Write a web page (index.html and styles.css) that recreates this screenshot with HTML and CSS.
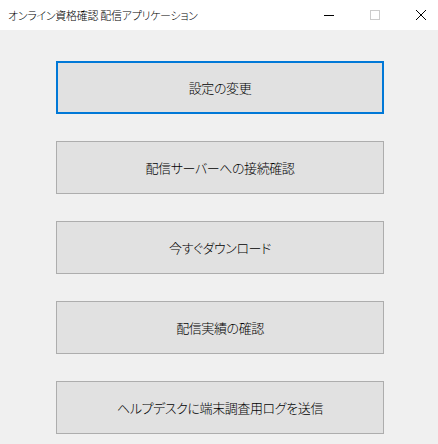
FILE: index.html
```html
<!DOCTYPE html>
<html lang="ja">
<head>
<meta charset="utf-8">
<link rel="stylesheet" href="styles.css">
</head>
<body>
<div class="window">
  <div class="titlebar">
    <div class="title">オンライン資格確認 配信アプリケーション</div>
    <div class="controls">
      <div class="ctl">
        <svg width="10" height="10" viewBox="0 0 10 10"><line x1="0" y1="5.5" x2="10" y2="5.5" stroke="#000" stroke-width="1"/></svg>
      </div>
      <div class="ctl">
        <svg width="10" height="10" viewBox="0 0 10 10"><rect x="0.5" y="0.5" width="9" height="9" fill="none" stroke="#cccccc" stroke-width="1"/></svg>
      </div>
      <div class="ctl">
        <svg width="10" height="10" viewBox="0 0 10 10"><path d="M0 0 L10 10 M10 0 L0 10" stroke="#000" stroke-width="1" fill="none"/></svg>
      </div>
    </div>
  </div>
  <div class="content">
    <button class="btn focused">設定の変更</button>
    <button class="btn">配信サーバーへの接続確認</button>
    <button class="btn">今すぐダウンロード</button>
    <button class="btn">配信実績の確認</button>
    <button class="btn">ヘルプデスクに端末調査用ログを送信</button>
  </div>
</div>
</body>
</html>
```

FILE: styles.css
```css
html, body {
  margin: 0;
  padding: 0;
}
body {
  width: 438px;
  height: 444px;
  overflow: hidden;
  font-family: "Noto Sans CJK JP", "Noto Sans", sans-serif;
  background: #f0f0f0;
}
.window {
  display: flex;
  flex-direction: column;
  height: 444px;
}
.titlebar {
  height: 30px;
  background: #ffffff;
  display: flex;
  align-items: center;
  justify-content: space-between;
}
.title {
  padding-left: 8px;
  font-size: 11px;
  font-weight: 300;
  color: #000;
  font-feature-settings: "palt";
  letter-spacing: -0.3px;
  line-height: 30px;
}
.controls {
  display: flex;
  height: 30px;
  margin-right: -6px;
}
.ctl {
  width: 46px;
  height: 30px;
  display: flex;
  align-items: center;
  justify-content: center;
}
.ctl svg {
  display: block;
  margin-top: -1px;
}
.content {
  flex: 1;
  background: #f0f0f0;
  display: flex;
  flex-direction: column;
  gap: 27px;
  padding: 31px 0 0 56px;
}
.btn {
  box-sizing: border-box;
  width: 328px;
  height: 53px;
  background: #e1e1e1;
  border: 1px solid #adadad;
  margin: 0;
  padding: 0 0 1px 0;
  font-family: "Noto Sans CJK JP", "Noto Sans", sans-serif;
  font-size: 13px;
  font-weight: 300;
  font-feature-settings: "palt";
  letter-spacing: -0.4px;
  color: #000;
  text-align: center;
  line-height: 1;
}
.btn.focused {
  border: 2px solid #0078d7;
}
```
